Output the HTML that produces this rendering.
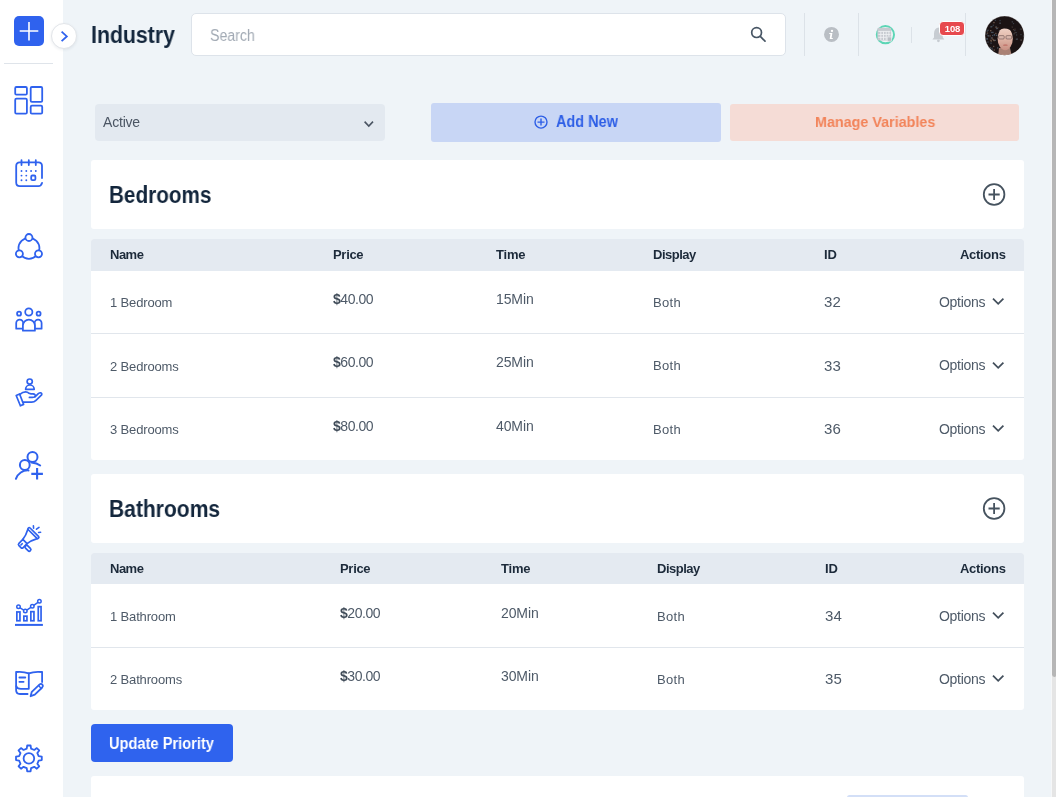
<!DOCTYPE html>
<html><head><meta charset="utf-8"><style>
html,body{margin:0;padding:0;width:1056px;height:797px;overflow:hidden;background:#eff4f8;font-family:"Liberation Sans",sans-serif;}
.t{position:absolute;white-space:nowrap;font-family:"Liberation Sans",sans-serif;will-change:transform;}
</style></head><body>
<div style="position:absolute;left:0px;top:0px;width:63px;height:797px;background:#ffffff;border-radius:0;"></div><div style="position:absolute;left:1051px;top:0px;width:1px;height:797px;background:#f6f7f8;border-radius:0;"></div><div style="position:absolute;left:1052px;top:0px;width:4px;height:797px;background:#e5e5e5;border-radius:0;"></div><div style="position:absolute;left:1052px;top:0px;width:4px;height:677px;background:#b6b6b6;border-radius:0 0 2px 3px;"></div><div style="position:absolute;left:14px;top:16px;width:30px;height:30px;background:#2f62ee;border-radius:5px;"></div><div style="position:absolute;left:51px;top:23.2px;width:26.2px;height:26.2px;box-sizing:border-box;border:1px solid #e2e5e9;border-radius:50%;background:#fff;box-shadow:0 1px 3px rgba(30,50,80,0.08);"></div><div style="position:absolute;left:4px;top:63px;width:49px;height:1px;background:#dfe4ea;border-radius:0;"></div><svg style="position:absolute;left:50px;top:22px" width="28" height="28" viewBox="50 22 28 28"><path d="M61.6 31.7L66.8 36.4L61.6 41.1" stroke="#2f62ee" stroke-width="1.8" fill="none"/></svg><svg style="position:absolute;left:0;top:0" width="63" height="797" viewBox="0 0 63 797"><path d="M29 22V40.5M19.7 31H38.3" stroke="#fff" stroke-width="1.6" fill="none"/><g stroke="#2f62ee" fill="none" stroke-width="1.8" stroke-linejoin="round"><rect x="15.2" y="87" width="11.7" height="7.7" rx="1.2"/><rect x="15.2" y="98.7" width="11.7" height="15" rx="1.2"/><rect x="30.7" y="87" width="11.5" height="14.9" rx="1.2"/><rect x="30.7" y="105.7" width="11.5" height="8" rx="1.2"/></g><g stroke="#2f62ee" fill="none" stroke-linecap="round" stroke-linejoin="round" stroke-width="1.8"><path d="M42 178V166Q42 162.4 38.4 162.4H19.8Q16.2 162.4 16.2 166V182.6Q16.2 186.2 19.8 186.2H38.4Q41.2 186.2 42.1 182.8"/><path d="M21.5 160.2V165M28.8 160.2V165M35.8 160.2V165"/><rect x="31.2" y="175.5" width="4.2" height="4.7" rx="1.2"/></g><circle cx="21.5" cy="171.0" r="0.95" fill="#2f62ee"/><circle cx="26.3" cy="171.0" r="0.95" fill="#2f62ee"/><circle cx="31.1" cy="171.0" r="0.95" fill="#2f62ee"/><circle cx="35.8" cy="171.0" r="0.95" fill="#2f62ee"/><circle cx="21.5" cy="175.6" r="0.95" fill="#2f62ee"/><circle cx="26.3" cy="175.6" r="0.95" fill="#2f62ee"/><circle cx="21.5" cy="180.3" r="0.95" fill="#2f62ee"/><circle cx="26.3" cy="180.3" r="0.95" fill="#2f62ee"/><g stroke="#2f62ee" fill="none" stroke-linecap="round" stroke-linejoin="round" stroke-width="1.8"><circle cx="28.95" cy="248.3" r="10.5"/></g><g stroke="#2f62ee" stroke-width="1.8" fill="#fff"><circle cx="28.95" cy="237.5" r="3.5"/><circle cx="19.4" cy="253.8" r="3.5"/><circle cx="38.5" cy="253.8" r="3.5"/></g><g stroke="#2f62ee" stroke-width="1.75" fill="#fff" stroke-linejoin="round"><circle cx="28.8" cy="312" r="3.6"/><circle cx="19.05" cy="313.7" r="2.0"/><circle cx="38.6" cy="313.7" r="2.0"/><path d="M16.2 328.7V323A3.5 3.5 0 0 1 23.2 323V328.7Z"/><path d="M34.6 328.7V323A3.5 3.5 0 0 1 41.6 323V328.7Z"/><path d="M22.9 330.7V325.5A6 6 0 0 1 34.9 325.5V330.7Z"/></g><g stroke="#2f62ee" fill="none" stroke-linecap="round" stroke-linejoin="round" stroke-width="1.7"><circle cx="29.7" cy="381.6" r="2.6"/><path d="M25.6 389.3A4.3 4.3 0 0 1 34.2 389.3Z"/><path d="M16.2 395.5L19.6 394L23.6 404.4L20.4 405.8Z"/><path d="M19.9 394.4Q23.5 391.2 27.5 392.2Q28.6 393.6 31 393.8H33Q35.6 394.2 35.2 396Q34.6 397.4 32.5 397.4H29.4"/><path d="M22.8 402.2H31.6Q34.2 402.2 36 400.3L41.6 394.9Q42.3 393.4 40.6 392.8Q39.6 392.6 38.3 393.6L35 396.8"/></g><g stroke="#2f62ee" stroke-width="2" fill="none" stroke-linecap="round"><circle cx="32.5" cy="457" r="5.0" fill="#fff"/><path d="M31.5 462.6Q37 463.2 40.2 465.5"/><circle cx="24.8" cy="465" r="4.9" fill="#fff"/><path d="M15.9 478.8A12.5 12.5 0 0 1 28.5 470.4"/></g><path d="M37.1 468V479.6M31.3 473.9H42.9" stroke="#2f62ee" stroke-width="2.1" fill="none"/><g stroke="#2f62ee" fill="none" stroke-linecap="round" stroke-linejoin="round" stroke-width="1.7" transform="translate(28 538.5) rotate(-45)"><rect x="6.4" y="-7.2" width="2.5" height="14.4" rx="1.25"/><path d="M6.4 -6.6Q0.5 -3.4 -4.3 -3M6.4 6.6Q0.5 3.4 -4.3 3"/><path d="M-4.3 -3H-9.8Q-11.4 -3 -11.4 -1.4V1.4Q-11.4 3 -9.8 3H-4.3Z"/><path d="M-9.6 -0.4H-7.8"/><rect x="-8.6" y="3.4" width="3.3" height="6.9" rx="1.65"/></g><g stroke="#2f62ee" fill="none" stroke-linecap="round" stroke-linejoin="round" stroke-width="1.6"><path d="M33.4 525.8L33.6 528.2M36.5 529.2L39 527.4M38.6 532.5L40.6 532.3"/></g><g stroke="#2f62ee" fill="none" stroke-width="1.7"><rect x="16.85" y="611.95" width="3.1" height="8.8"/><rect x="23.85" y="616.15" width="3.1" height="4.6"/><rect x="30.85" y="611.65" width="3.1" height="9.1"/><rect x="38.25" y="606.65" width="2.8" height="14.1"/><path d="M18.5 606.8L25.3 611.1L32.3 606.3L39.4 601.3" stroke-width="1.5"/></g><path d="M15 624.9H42.9" stroke="#2f62ee" stroke-width="2"/><g stroke="#2f62ee" stroke-width="1.5" fill="#fff"><circle cx="18.5" cy="606.8" r="1.75"/><circle cx="25.3" cy="611.1" r="1.75"/><circle cx="32.3" cy="606.3" r="1.75"/><circle cx="39.4" cy="601.3" r="1.75"/></g><g stroke="#2f62ee" fill="none" stroke-linecap="round" stroke-linejoin="round" stroke-width="1.8"><path d="M28.8 673.4Q23 671.2 16.1 672V690Q16.1 694 20 694H27.6"/><path d="M16.4 686.2Q17 688.8 21 688.8H28.8V673.4Q34 671.2 42.1 672V682"/><path d="M19.4 677.5H25.3M19.4 681.8H23.6"/><path d="M30.6 696.2L31.8 691.8L39.4 684.6Q41 683.2 42.4 684.6Q43.6 686 42.2 687.5L34.8 694.6Z"/><path d="M38.6 685.6L41.2 688.4" stroke-width="1.4"/></g><g stroke="#2f62ee" fill="none" stroke-linecap="round" stroke-linejoin="round" stroke-width="1.8"><path d="M38.66 756.22 L41.79 756.71 L41.79 760.09 L38.66 760.58 L37.34 763.76 L39.21 766.32 L36.82 768.71 L34.26 766.84 L31.08 768.16 L30.59 771.29 L27.21 771.29 L26.72 768.16 L23.54 766.84 L20.98 768.71 L18.59 766.32 L20.46 763.76 L19.14 760.58 L16.01 760.09 L16.01 756.71 L19.14 756.22 L20.46 753.04 L18.59 750.48 L20.98 748.09 L23.54 749.96 L26.72 748.64 L27.21 745.51 L30.59 745.51 L31.08 748.64 L34.26 749.96 L36.82 748.09 L39.21 750.48 L37.34 753.04Z"/><circle cx="28.9" cy="758.4" r="5.3"/></g></svg><div class="t" style="left:91.30px;top:23.53px;font-size:23px;line-height:23px;font-weight:700;color:#13263c;letter-spacing:0px;transform:scaleX(0.925);transform-origin:left top;">Industry</div><div style="position:absolute;left:191px;top:13px;width:595px;height:43px;box-sizing:border-box;border:1px solid #dde3ea;border-radius:5px;background:#fff"></div><div class="t" style="left:210.40px;top:27.96px;font-size:16px;line-height:16px;font-weight:400;color:#a3abb5;letter-spacing:0px;transform:scaleX(0.885);transform-origin:left top;">Search</div><svg style="position:absolute;left:700px;top:0" width="356" height="70" viewBox="700 0 356 70"><g stroke="#475564" stroke-width="1.7" fill="none" stroke-linecap="round"><circle cx="756.6" cy="32.6" r="4.9"/><path d="M760.3 36.4L765 41.2"/></g><path d="M804.5 13V56" stroke="#dce2e8" stroke-width="1"/><path d="M858.5 13V56" stroke="#dce2e8" stroke-width="1"/><path d="M911.5 27V43" stroke="#dce2e8" stroke-width="1"/><path d="M965.5 13V56" stroke="#dce2e8" stroke-width="1"/><circle cx="831.5" cy="34.4" r="7.5" fill="#b9bec4"/><circle cx="832" cy="30.9" r="1.15" fill="#fff"/><path d="M829.3 33H832.4L831.6 38H832.9L832.7 39.1H829.7L830.4 34.1H829.2Z" fill="#fff"/><circle cx="885.4" cy="34.7" r="8.6" fill="#f3f5f8" stroke="#5cd6b6" stroke-width="2"/><rect x="877.4" y="27.8" width="13.8" height="12.6" rx="1.2" fill="#c6cad0"/><g stroke="#eef0f3" stroke-width="0.9"><path d="M878.3 31.4H890.4M878.3 34.4H890.4M878.3 37.3H886.6M880.8 31.4V40M883.5 31.4V40M886.2 31.4V40M888.9 31.4V36.4"/></g><rect x="887.2" y="37" width="4.2" height="4.2" fill="#b9bec4" stroke="#eef0f3" stroke-width="0.6"/><path d="M938.2 27.6Q942.6 28.6 942.8 33.4V37.6L944.4 39.4H932.4L934 37.6V33.4Q934.2 28.6 938.2 27.6Z" fill="#c7ccd2"/><circle cx="938.4" cy="40.8" r="1.4" fill="#c7ccd2"/></svg><div style="position:absolute;left:938.5px;top:21px;width:26px;height:15px;box-sizing:border-box;border:1px solid #fff;border-radius:4px;background:#e7494e;color:#fff;font-size:9.5px;font-weight:700;line-height:13.5px;letter-spacing:-0.2px;text-align:center;padding-left:1px;will-change:transform;font-family:'Liberation Sans',sans-serif">108</div><svg style="position:absolute;left:984px;top:15px" width="42" height="42" viewBox="984 15 42 42"><defs><clipPath id="av"><circle cx="1004.6" cy="35.7" r="19.6"/></clipPath><linearGradient id="fc" x1="0" y1="0" x2="0" y2="1"><stop offset="0" stop-color="#efd3c8"/><stop offset="0.45" stop-color="#e2b9aa"/><stop offset="1" stop-color="#c98f82"/></linearGradient></defs><g clip-path="url(#av)"><rect x="984" y="15" width="42" height="42" fill="#1b1314"/><rect x="994.8" y="19.7" width="1.3" height="1.3" fill="#3a4652" opacity="0.8"/><rect x="986.4" y="38.6" width="1.3" height="1.3" fill="#3a4652" opacity="0.8"/><rect x="991.3" y="25.9" width="1.3" height="1.3" fill="#3a4652" opacity="0.8"/><rect x="991.4" y="47.6" width="1.3" height="1.3" fill="#4a5866" opacity="0.8"/><rect x="999.2" y="40.3" width="1.3" height="1.3" fill="#3a4652" opacity="0.8"/><rect x="999.2" y="38.4" width="1.3" height="1.3" fill="#8a7060" opacity="0.8"/><rect x="993.3" y="21.9" width="1.3" height="1.3" fill="#8a7060" opacity="0.8"/><rect x="989.6" y="47.2" width="1.3" height="1.3" fill="#5d6b78" opacity="0.8"/><rect x="986.5" y="38.1" width="1.3" height="1.3" fill="#5d6b78" opacity="0.8"/><rect x="990.6" y="37.3" width="1.3" height="1.3" fill="#4a5866" opacity="0.8"/><rect x="993.5" y="39.9" width="1.3" height="1.3" fill="#8a7060" opacity="0.8"/><rect x="995.2" y="32.8" width="1.3" height="1.3" fill="#7a6250" opacity="0.8"/><rect x="990.4" y="26.2" width="1.3" height="1.3" fill="#5d6b78" opacity="0.8"/><rect x="995.5" y="26.0" width="1.3" height="1.3" fill="#3a4652" opacity="0.8"/><rect x="989.5" y="35.3" width="1.3" height="1.3" fill="#7a6250" opacity="0.8"/><rect x="995.9" y="27.7" width="1.3" height="1.3" fill="#4a5866" opacity="0.8"/><rect x="986.8" y="32.5" width="1.3" height="1.3" fill="#7a6250" opacity="0.8"/><rect x="987.3" y="35.1" width="1.3" height="1.3" fill="#4a5866" opacity="0.8"/><rect x="999.4" y="19.9" width="1.3" height="1.3" fill="#3a4652" opacity="0.8"/><rect x="993.6" y="49.4" width="1.3" height="1.3" fill="#7a6250" opacity="0.8"/><rect x="990.1" y="30.0" width="1.3" height="1.3" fill="#8a7060" opacity="0.8"/><rect x="993.7" y="33.9" width="1.3" height="1.3" fill="#4a5866" opacity="0.8"/><rect x="999.2" y="34.5" width="1.3" height="1.3" fill="#4a5866" opacity="0.8"/><rect x="997.3" y="27.5" width="1.3" height="1.3" fill="#8a7060" opacity="0.8"/><rect x="998.3" y="29.8" width="1.3" height="1.3" fill="#8a7060" opacity="0.8"/><rect x="990.3" y="39.6" width="1.3" height="1.3" fill="#8a7060" opacity="0.8"/><rect x="986.2" y="33.6" width="1.3" height="1.3" fill="#3a4652" opacity="0.8"/><rect x="991.5" y="37.4" width="1.3" height="1.3" fill="#8a7060" opacity="0.8"/><rect x="999.8" y="42.3" width="1.3" height="1.3" fill="#8a7060" opacity="0.8"/><rect x="999.4" y="22.6" width="1.3" height="1.3" fill="#5d6b78" opacity="0.8"/><rect x="987.3" y="41.4" width="1.3" height="1.3" fill="#4a5866" opacity="0.8"/><rect x="992.3" y="38.8" width="1.3" height="1.3" fill="#7a6250" opacity="0.8"/><rect x="993.0" y="39.6" width="1.3" height="1.3" fill="#7a6250" opacity="0.8"/><rect x="999.3" y="42.5" width="1.3" height="1.3" fill="#3a4652" opacity="0.8"/><rect x="999.3" y="41.2" width="1.3" height="1.3" fill="#4a5866" opacity="0.8"/><rect x="991.8" y="49.2" width="1.3" height="1.3" fill="#3a4652" opacity="0.8"/><rect x="990.9" y="31.8" width="1.3" height="1.3" fill="#4a5866" opacity="0.8"/><rect x="992.2" y="31.8" width="1.3" height="1.3" fill="#5d6b78" opacity="0.8"/><rect x="987.4" y="29.6" width="1.3" height="1.3" fill="#4a5866" opacity="0.8"/><rect x="986.5" y="38.0" width="1.3" height="1.3" fill="#3a4652" opacity="0.8"/><rect x="986.5" y="30.5" width="1.3" height="1.3" fill="#4a5866" opacity="0.8"/><rect x="990.6" y="40.5" width="1.3" height="1.3" fill="#7a6250" opacity="0.8"/><rect x="994.0" y="34.5" width="1.3" height="1.3" fill="#4a5866" opacity="0.8"/><rect x="992.0" y="34.9" width="1.3" height="1.3" fill="#4a5866" opacity="0.8"/><rect x="996.1" y="34.7" width="1.3" height="1.3" fill="#5d6b78" opacity="0.8"/><rect x="992.7" y="24.6" width="1.3" height="1.3" fill="#3a4652" opacity="0.8"/><rect x="990.4" y="42.5" width="1.3" height="1.3" fill="#4a5866" opacity="0.8"/><rect x="996.4" y="28.0" width="1.3" height="1.3" fill="#4a5866" opacity="0.8"/><rect x="995.4" y="26.7" width="1.3" height="1.3" fill="#7a6250" opacity="0.8"/><rect x="998.6" y="30.2" width="1.3" height="1.3" fill="#5d6b78" opacity="0.8"/><rect x="993.0" y="45.8" width="1.3" height="1.3" fill="#7a6250" opacity="0.8"/><rect x="994.5" y="39.7" width="1.3" height="1.3" fill="#5d6b78" opacity="0.8"/><rect x="997.1" y="47.3" width="1.3" height="1.3" fill="#5d6b78" opacity="0.8"/><rect x="988.0" y="35.2" width="1.3" height="1.3" fill="#4a5866" opacity="0.8"/><rect x="1022.9" y="35.4" width="1.2" height="1.2" fill="#5d6b78" opacity="0.6"/><rect x="1013.4" y="33.2" width="1.2" height="1.2" fill="#5d6b78" opacity="0.6"/><rect x="1015.8" y="38.6" width="1.2" height="1.2" fill="#5d6b78" opacity="0.6"/><rect x="1012.9" y="23.0" width="1.2" height="1.2" fill="#4a5866" opacity="0.6"/><rect x="1014.4" y="28.6" width="1.2" height="1.2" fill="#6a5548" opacity="0.6"/><rect x="1020.9" y="28.5" width="1.2" height="1.2" fill="#6a5548" opacity="0.6"/><rect x="1014.5" y="32.1" width="1.2" height="1.2" fill="#6a5548" opacity="0.6"/><rect x="1011.6" y="26.5" width="1.2" height="1.2" fill="#6a5548" opacity="0.6"/><rect x="1019.8" y="28.5" width="1.2" height="1.2" fill="#4a5866" opacity="0.6"/><rect x="1015.6" y="32.0" width="1.2" height="1.2" fill="#4a5866" opacity="0.6"/><rect x="1020.4" y="39.4" width="1.2" height="1.2" fill="#5d6b78" opacity="0.6"/><rect x="1016.0" y="34.4" width="1.2" height="1.2" fill="#4a5866" opacity="0.6"/><rect x="1011.7" y="21.3" width="1.2" height="1.2" fill="#5d6b78" opacity="0.6"/><rect x="1020.7" y="39.6" width="1.2" height="1.2" fill="#6a5548" opacity="0.6"/><rect x="1020.4" y="34.0" width="1.2" height="1.2" fill="#4a5866" opacity="0.6"/><rect x="1016.8" y="38.5" width="1.2" height="1.2" fill="#5d6b78" opacity="0.6"/><rect x="1012.8" y="29.0" width="1.2" height="1.2" fill="#6a5548" opacity="0.6"/><rect x="1014.2" y="30.0" width="1.2" height="1.2" fill="#4a5866" opacity="0.6"/><path d="M999 48L1010 48L1012 57L998 57Z" fill="#a98175"/><ellipse cx="1005.2" cy="38.6" rx="7.6" ry="11.6" fill="url(#fc)"/><path d="M996.5 33Q998 24 1006 25Q1013 26 1014 34Q1010 28.5 1004 28.6Q999.5 29 996.5 33Z" fill="#1b1314"/><g fill="#d8b6ab" stroke="#6a5250" stroke-width="0.6"><rect x="998.6" y="35.6" width="5.6" height="3.4" rx="1"/><rect x="1006" y="35.6" width="5.6" height="3.4" rx="1"/></g><ellipse cx="1005.4" cy="45.2" rx="2.4" ry="0.9" fill="#c47a70"/></g><circle cx="1004.6" cy="35.7" r="19.7" fill="none" stroke="#ffffff" stroke-opacity="0.6" stroke-width="0.6"/></svg><div style="position:absolute;left:95px;top:104px;width:290px;height:37px;background:#e3e9f0;border-radius:4px;"></div><div class="t" style="left:102.60px;top:114.95px;font-size:14px;line-height:14px;font-weight:400;color:#4b5563;letter-spacing:-0.2px;">Active</div><div style="position:absolute;left:431px;top:103px;width:290px;height:39px;background:#c8d6f5;border-radius:3px;"></div><div class="t" style="left:555.60px;top:113.56px;font-size:16px;line-height:16px;font-weight:700;color:#2e5fe6;letter-spacing:0px;transform:scaleX(0.905);transform-origin:left top;">Add New</div><div style="position:absolute;left:730px;top:104px;width:289px;height:37px;background:#f5dcd6;border-radius:3px;"></div><div class="t" style="left:815.00px;top:114.48px;font-size:15.5px;line-height:15.5px;font-weight:700;color:#f2845a;letter-spacing:0px;transform:scaleX(0.925);transform-origin:left top;">Manage Variables</div><svg style="position:absolute;left:0;top:0" width="1056" height="160" viewBox="0 0 1056 160"><path d="M364.6 121.6L368.8 126L373 121.6" stroke="#4b5563" stroke-width="1.6" fill="none"/><g stroke="#2e5fe6" stroke-width="1.4" fill="none"><circle cx="541" cy="122.1" r="6"/><path d="M541 118.6V125.6M537.5 122.1H544.5"/></g></svg><div style="position:absolute;left:91px;top:160px;width:933px;height:69px;background:#fff;border-radius:3px;"></div><div class="t" style="left:109.30px;top:183.53px;font-size:23px;line-height:23px;font-weight:700;color:#13263c;letter-spacing:0px;transform:scaleX(0.9);transform-origin:left top;">Bedrooms</div><svg style="position:absolute;left:980px;top:160px" width="30" height="69" viewBox="980 160 30 69"><g stroke="#46535f" stroke-width="1.8" fill="none"><circle cx="994.1" cy="194.5" r="10.3"/><path d="M994.1 188.9V200.1M988.5 194.5H999.7"/></g></svg><div style="position:absolute;left:91px;top:239px;width:933px;height:221px;background:#fff;border-radius:3px;"></div><div style="position:absolute;left:91px;top:239px;width:933px;height:32px;background:#e4eaf1;border-radius:3px 3px 0 0;"></div><div class="t" style="left:110.00px;top:248.30px;font-size:13px;line-height:13px;font-weight:700;color:#1c2a3a;letter-spacing:-0.5px;">Name</div><div class="t" style="left:332.50px;top:248.30px;font-size:13px;line-height:13px;font-weight:700;color:#1c2a3a;letter-spacing:-0.3px;">Price</div><div class="t" style="left:496.00px;top:248.30px;font-size:13px;line-height:13px;font-weight:700;color:#1c2a3a;letter-spacing:-0.2px;">Time</div><div class="t" style="left:653.00px;top:248.30px;font-size:13px;line-height:13px;font-weight:700;color:#1c2a3a;letter-spacing:-0.5px;">Display</div><div class="t" style="left:824.00px;top:248.30px;font-size:13px;line-height:13px;font-weight:700;color:#1c2a3a;letter-spacing:0px;">ID</div><div class="t" style="right:50.40px;text-align:right;top:248.30px;font-size:13px;line-height:13px;font-weight:700;color:#1c2a3a;letter-spacing:-0.3px;">Actions</div><div class="t" style="left:110.00px;top:296.00px;font-size:13px;line-height:13px;font-weight:400;color:#4e5a68;letter-spacing:-0.15px;">1 Bedroom</div><div class="t" style="left:332.50px;top:291.85px;font-size:14px;line-height:14px;font-weight:400;color:#4e5a68;letter-spacing:-0.45px;"><b style="font-weight:700;color:#3f4b58">$</b>40.00</div><div class="t" style="left:496.40px;top:291.85px;font-size:14px;line-height:14px;font-weight:400;color:#4e5a68;letter-spacing:-0.1px;">15Min</div><div class="t" style="left:653.00px;top:295.80px;font-size:13px;line-height:13px;font-weight:400;color:#4e5a68;letter-spacing:0.3px;">Both</div><div class="t" style="left:824.00px;top:294.30px;font-size:15px;line-height:15px;font-weight:400;color:#4e5a68;letter-spacing:0.1px;">32</div><div class="t" style="right:70.80px;text-align:right;top:294.55px;font-size:14px;line-height:14px;font-weight:400;color:#4e5a68;letter-spacing:-0.3px;">Options</div><svg style="position:absolute;left:990px;top:294.0px" width="18" height="16" viewBox="0 0 18 16"><path d="M3.0 4.6L8.2 9.8L13.4 4.6" stroke="#434f5c" stroke-width="1.75" fill="none"/></svg><div style="position:absolute;left:91px;top:333px;width:933px;height:1px;background:#e1e6ec;border-radius:0;"></div><div class="t" style="left:110.00px;top:359.50px;font-size:13px;line-height:13px;font-weight:400;color:#4e5a68;letter-spacing:-0.15px;">2 Bedrooms</div><div class="t" style="left:332.50px;top:355.35px;font-size:14px;line-height:14px;font-weight:400;color:#4e5a68;letter-spacing:-0.45px;"><b style="font-weight:700;color:#3f4b58">$</b>60.00</div><div class="t" style="left:496.40px;top:355.35px;font-size:14px;line-height:14px;font-weight:400;color:#4e5a68;letter-spacing:-0.1px;">25Min</div><div class="t" style="left:653.00px;top:359.30px;font-size:13px;line-height:13px;font-weight:400;color:#4e5a68;letter-spacing:0.3px;">Both</div><div class="t" style="left:824.00px;top:357.80px;font-size:15px;line-height:15px;font-weight:400;color:#4e5a68;letter-spacing:0.1px;">33</div><div class="t" style="right:70.80px;text-align:right;top:358.05px;font-size:14px;line-height:14px;font-weight:400;color:#4e5a68;letter-spacing:-0.3px;">Options</div><svg style="position:absolute;left:990px;top:357.5px" width="18" height="16" viewBox="0 0 18 16"><path d="M3.0 4.6L8.2 9.8L13.4 4.6" stroke="#434f5c" stroke-width="1.75" fill="none"/></svg><div style="position:absolute;left:91px;top:397px;width:933px;height:1px;background:#e1e6ec;border-radius:0;"></div><div class="t" style="left:110.00px;top:423.00px;font-size:13px;line-height:13px;font-weight:400;color:#4e5a68;letter-spacing:-0.15px;">3 Bedrooms</div><div class="t" style="left:332.50px;top:418.85px;font-size:14px;line-height:14px;font-weight:400;color:#4e5a68;letter-spacing:-0.45px;"><b style="font-weight:700;color:#3f4b58">$</b>80.00</div><div class="t" style="left:496.40px;top:418.85px;font-size:14px;line-height:14px;font-weight:400;color:#4e5a68;letter-spacing:-0.1px;">40Min</div><div class="t" style="left:653.00px;top:422.80px;font-size:13px;line-height:13px;font-weight:400;color:#4e5a68;letter-spacing:0.3px;">Both</div><div class="t" style="left:824.00px;top:421.30px;font-size:15px;line-height:15px;font-weight:400;color:#4e5a68;letter-spacing:0.1px;">36</div><div class="t" style="right:70.80px;text-align:right;top:421.55px;font-size:14px;line-height:14px;font-weight:400;color:#4e5a68;letter-spacing:-0.3px;">Options</div><svg style="position:absolute;left:990px;top:421.0px" width="18" height="16" viewBox="0 0 18 16"><path d="M3.0 4.6L8.2 9.8L13.4 4.6" stroke="#434f5c" stroke-width="1.75" fill="none"/></svg><div style="position:absolute;left:91px;top:474px;width:933px;height:69px;background:#fff;border-radius:3px;"></div><div class="t" style="left:109.30px;top:497.83px;font-size:23px;line-height:23px;font-weight:700;color:#13263c;letter-spacing:0px;transform:scaleX(0.915);transform-origin:left top;">Bathrooms</div><svg style="position:absolute;left:980px;top:474px" width="30" height="69" viewBox="980 474 30 69"><g stroke="#46535f" stroke-width="1.8" fill="none"><circle cx="994.1" cy="508.5" r="10.3"/><path d="M994.1 502.9V514.1M988.5 508.5H999.7"/></g></svg><div style="position:absolute;left:91px;top:553px;width:933px;height:157px;background:#fff;border-radius:3px;"></div><div style="position:absolute;left:91px;top:553px;width:933px;height:31px;background:#e4eaf1;border-radius:3px 3px 0 0;"></div><div class="t" style="left:110.00px;top:562.30px;font-size:13px;line-height:13px;font-weight:700;color:#1c2a3a;letter-spacing:-0.5px;">Name</div><div class="t" style="left:339.70px;top:562.30px;font-size:13px;line-height:13px;font-weight:700;color:#1c2a3a;letter-spacing:-0.3px;">Price</div><div class="t" style="left:501.00px;top:562.30px;font-size:13px;line-height:13px;font-weight:700;color:#1c2a3a;letter-spacing:-0.2px;">Time</div><div class="t" style="left:657.10px;top:562.30px;font-size:13px;line-height:13px;font-weight:700;color:#1c2a3a;letter-spacing:-0.5px;">Display</div><div class="t" style="left:825.30px;top:562.30px;font-size:13px;line-height:13px;font-weight:700;color:#1c2a3a;letter-spacing:0px;">ID</div><div class="t" style="right:50.40px;text-align:right;top:562.30px;font-size:13px;line-height:13px;font-weight:700;color:#1c2a3a;letter-spacing:-0.3px;">Actions</div><div class="t" style="left:110.00px;top:610.00px;font-size:13px;line-height:13px;font-weight:400;color:#4e5a68;letter-spacing:-0.15px;">1 Bathroom</div><div class="t" style="left:339.70px;top:605.85px;font-size:14px;line-height:14px;font-weight:400;color:#4e5a68;letter-spacing:-0.45px;"><b style="font-weight:700;color:#3f4b58">$</b>20.00</div><div class="t" style="left:501.40px;top:605.85px;font-size:14px;line-height:14px;font-weight:400;color:#4e5a68;letter-spacing:-0.1px;">20Min</div><div class="t" style="left:657.10px;top:609.80px;font-size:13px;line-height:13px;font-weight:400;color:#4e5a68;letter-spacing:0.3px;">Both</div><div class="t" style="left:825.30px;top:608.30px;font-size:15px;line-height:15px;font-weight:400;color:#4e5a68;letter-spacing:0.1px;">34</div><div class="t" style="right:70.80px;text-align:right;top:608.55px;font-size:14px;line-height:14px;font-weight:400;color:#4e5a68;letter-spacing:-0.3px;">Options</div><svg style="position:absolute;left:990px;top:608.0px" width="18" height="16" viewBox="0 0 18 16"><path d="M3.0 4.6L8.2 9.8L13.4 4.6" stroke="#434f5c" stroke-width="1.75" fill="none"/></svg><div style="position:absolute;left:91px;top:647px;width:933px;height:1px;background:#e1e6ec;border-radius:0;"></div><div class="t" style="left:110.00px;top:673.00px;font-size:13px;line-height:13px;font-weight:400;color:#4e5a68;letter-spacing:-0.15px;">2 Bathrooms</div><div class="t" style="left:339.70px;top:668.85px;font-size:14px;line-height:14px;font-weight:400;color:#4e5a68;letter-spacing:-0.45px;"><b style="font-weight:700;color:#3f4b58">$</b>30.00</div><div class="t" style="left:501.40px;top:668.85px;font-size:14px;line-height:14px;font-weight:400;color:#4e5a68;letter-spacing:-0.1px;">30Min</div><div class="t" style="left:657.10px;top:672.80px;font-size:13px;line-height:13px;font-weight:400;color:#4e5a68;letter-spacing:0.3px;">Both</div><div class="t" style="left:825.30px;top:671.30px;font-size:15px;line-height:15px;font-weight:400;color:#4e5a68;letter-spacing:0.1px;">35</div><div class="t" style="right:70.80px;text-align:right;top:671.55px;font-size:14px;line-height:14px;font-weight:400;color:#4e5a68;letter-spacing:-0.3px;">Options</div><svg style="position:absolute;left:990px;top:671.0px" width="18" height="16" viewBox="0 0 18 16"><path d="M3.0 4.6L8.2 9.8L13.4 4.6" stroke="#434f5c" stroke-width="1.75" fill="none"/></svg><div style="position:absolute;left:91px;top:724px;width:142px;height:38px;background:#2f63ee;border-radius:4px;"></div><div class="t" style="left:109.30px;top:735.66px;font-size:16px;line-height:16px;font-weight:700;color:#ffffff;letter-spacing:0px;transform:scaleX(0.915);transform-origin:left top;">Update Priority</div><div style="position:absolute;left:91px;top:776px;width:933px;height:24px;background:#fff;border-radius:3px;"></div><div style="position:absolute;left:847px;top:794.6px;width:121px;height:5.399999999999977px;background:#d3dff7;border-radius:4px;"></div>
</body></html>
